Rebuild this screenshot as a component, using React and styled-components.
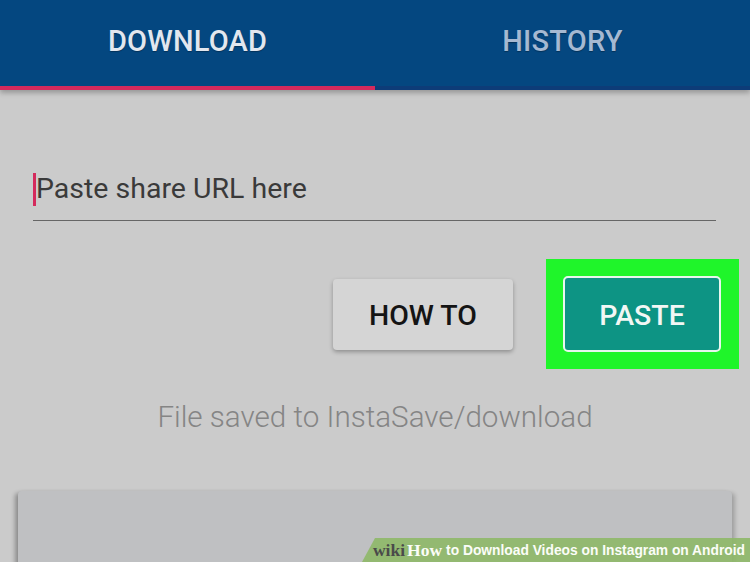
import React from "react";
import styled, { createGlobalStyle } from "styled-components";

const GlobalStyle = createGlobalStyle`
  html, body {
    margin: 0;
    padding: 0;
    background: #cbcbcb;
    overflow: hidden;
  }
  body {
    font-family: Roboto, "Noto Sans", sans-serif;
  }
`;

const Screen = styled.div`
  position: relative;
  width: 750px;
  height: 562px;
  overflow: hidden;
  background: #cbcbcb;
`;

const TabBar = styled.div`
  display: flex;
  height: 90px;
  background: #044780;
  box-shadow: 0 3px 5px rgba(0, 0, 0, 0.25);
`;

const Tab = styled.div`
  flex: 1;
  display: flex;
  align-items: center;
  justify-content: center;
  padding-bottom: 4px;
  box-sizing: border-box;
  font-size: 29px;
  font-weight: 500;
  letter-spacing: 0.2px;
  color: ${(p) => (p.$active ? "#e2e7ef" : "#a5b9d2")};
  border-bottom: 4px solid ${(p) => (p.$active ? "#d42a5c" : "#0d3c78")};
  text-shadow: 0 1px 1px rgba(0, 0, 0, 0.3);
`;

const Content = styled.div`
  display: flex;
  flex-direction: column;
`;

const InputRow = styled.div`
  margin: 80px 34px 0 33px;
  height: 51px;
  box-sizing: border-box;
  display: flex;
  align-items: flex-start;
  border-bottom: 1.5px solid #666;
`;

const Cursor = styled.span`
  width: 3px;
  height: 33px;
  margin-top: 3px;
  background: #d42a5c;
`;

const Placeholder = styled.span`
  margin-top: 5px;
  font-size: 28.5px;
  line-height: 1;
  color: #3a3a3a;
`;

const ButtonRow = styled.div`
  display: flex;
  justify-content: flex-end;
  align-items: center;
  gap: 33px;
  margin: 38px 11px 0 0;
`;

const FlatButton = styled.div`
  width: 180px;
  height: 71px;
  padding-top: 3px;
  box-sizing: border-box;
  display: flex;
  align-items: center;
  justify-content: center;
  border-radius: 4px;
  background: #d5d5d5;
  box-shadow: 0 2px 4px rgba(0, 0, 0, 0.3);
  color: #141414;
  font-size: 28.5px;
  font-weight: 500;
`;

const Highlight = styled.div`
  width: 193px;
  height: 110px;
  box-sizing: border-box;
  padding: 17px 18px 17px 17px;
  background: #1ff52a;
`;

const PasteButton = styled.div`
  height: 100%;
  padding-top: 3px;
  box-sizing: border-box;
  display: flex;
  align-items: center;
  justify-content: center;
  border: 2.5px solid #e8f6ee;
  border-radius: 5px;
  background: #0d9484;
  color: #f2f7f4;
  font-size: 28.5px;
  font-weight: 500;
`;

const Status = styled.div`
  margin-top: 31px;
  text-align: center;
  font-size: 29.6px;
  font-weight: 300;
  color: #858585;
`;

const Card = styled.div`
  margin: 57px 18px 0 18px;
  height: 120px;
  border-radius: 4px;
  background: #bfc0c2;
  box-shadow: -3px 2px 4px rgba(0, 0, 0, 0.3), 3px 2px 4px rgba(0, 0, 0, 0.2);
`;

const Watermark = styled.div`
  position: absolute;
  right: 0;
  bottom: 0;
  height: 24px;
  width: 388px;
  display: flex;
  align-items: center;
  justify-content: flex-end;
  padding-right: 5px;
  box-sizing: border-box;
  background: rgba(142, 184, 104, 0.9);
  clip-path: polygon(13px 0, 100% 0, 100% 100%, 0 100%);
  font-family: "Liberation Sans", Arial, sans-serif;
  font-weight: bold;
  font-size: 13.8px;
  color: #fbfdf8;
  white-space: nowrap;
`;

const Wiki = styled.span`
  font-family: "Liberation Serif", "Times New Roman", serif;
  font-size: 17.5px;
  color: #4a4a4a;
  margin-right: 2px;
`;

const How = styled.span`
  font-family: "Liberation Serif", "Times New Roman", serif;
  font-size: 17.5px;
  color: #fbfdf8;
  margin-right: 4px;
`;

export default function App() {
  return (
    <Screen>
      <GlobalStyle />
      <TabBar>
        <Tab $active>DOWNLOAD</Tab>
        <Tab>HISTORY</Tab>
      </TabBar>
      <Content>
        <InputRow>
          <Cursor />
          <Placeholder>Paste share URL here</Placeholder>
        </InputRow>
        <ButtonRow>
          <FlatButton>HOW TO</FlatButton>
          <Highlight>
            <PasteButton>PASTE</PasteButton>
          </Highlight>
        </ButtonRow>
        <Status>File saved to InstaSave/download</Status>
        <Card />
      </Content>
      <Watermark>
        <Wiki>wiki</Wiki>
        <How>How</How>
        to Download Videos on Instagram on Android
      </Watermark>
    </Screen>
  );
}
